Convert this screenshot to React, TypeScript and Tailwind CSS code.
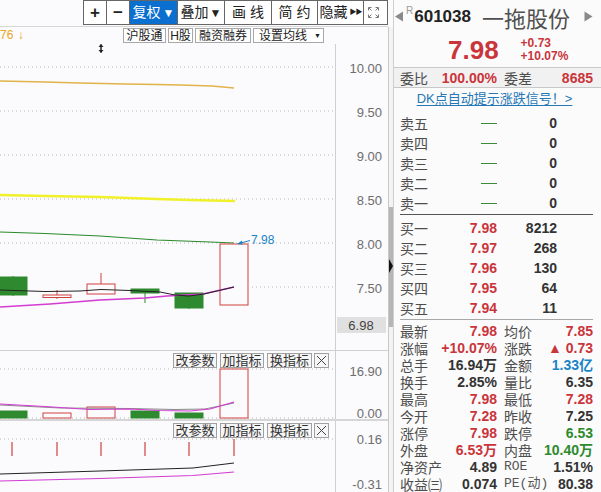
import React from "react";

const RED = "text-[#c9353b]";
const DARK = "text-[#333]";
const BLUE = "text-[#1a84c6]";
const GREEN = "text-[#2e8a2e]";

const sells = ["卖五", "卖四", "卖三", "卖二", "卖一"];
const buys = [
  ["买一", "7.98", "8212"],
  ["买二", "7.97", "268"],
  ["买三", "7.96", "130"],
  ["买四", "7.95", "64"],
  ["买五", "7.94", "11"],
];

const stats: [string, string, string, string, string, string][] = [
  ["最新", "7.98", RED, "均价", "7.85", RED],
  ["涨幅", "+10.07%", RED, "涨跌", "▲ 0.73", RED],
  ["总手", "16.94万", DARK, "金额", "1.33亿", BLUE],
  ["换手", "2.85%", DARK, "量比", "6.35", DARK],
  ["最高", "7.98", RED, "最低", "7.28", RED],
  ["今开", "7.28", RED, "昨收", "7.25", DARK],
  ["涨停", "7.98", RED, "跌停", "6.53", GREEN],
  ["外盘", "6.53万", RED, "内盘", "10.40万", GREEN],
  ["净资产", "4.89", DARK, "ROE", "1.51%", DARK],
  ["收益㈢", "0.074", DARK, "PE(动)", "80.38", DARK],
];

const candles = [
  { cx: 13, top: 277, bot: 295, wt: 276, wb: 296, up: false },
  { cx: 57, top: 295, bot: 297.5, wt: 290, wb: 299, up: true },
  { cx: 101, top: 284, bot: 294, wt: 273, wb: 294, up: true },
  { cx: 145, top: 289, bot: 293, wt: 289, wb: 303, up: false },
  { cx: 189, top: 293, bot: 308, wt: 293, wb: 309, up: false },
  { cx: 234, top: 244, bot: 305, wt: 244, wb: 305, up: true },
];

const vols = [
  { cx: 13, top: 411, up: false },
  { cx: 57, top: 413, up: true },
  { cx: 101, top: 407, up: true },
  { cx: 145, top: 411, up: false },
  { cx: 189, top: 413, up: false },
  { cx: 234, top: 369, up: true },
];

const CR = "#d0403f";
const CG = "#2f8a2f";

function Dotted({ y, x1 = 0, x2 = 335 }: { y: number; x1?: number; x2?: number }) {
  return <line x1={x1} x2={x2} y1={y} y2={y} stroke="#b8b8b8" strokeDasharray="1 3" />;
}

function AxisLabel({ y, v }: { y: number; v: string }) {
  return (
    <text x={382} y={y + 4.5} textAnchor="end" fontSize={13} fill="#6e6e6e" fontFamily="Liberation Sans">
      {v}
    </text>
  );
}

function PanelButtons() {
  const b = "h-[15px] border border-[#a0a0a0] bg-[#f6f6f6] text-[13px] leading-[13px] text-[#333] flex items-center justify-center whitespace-nowrap";
  return (
    <div className="absolute left-[173px] top-[2px] flex">
      <div className={`${b} w-[44px]`}>改参数</div>
      <div className={`${b} w-[44px] ml-[3px]`}>加指标</div>
      <div className={`${b} w-[45px] ml-[3px]`}>换指标</div>
      <div className={`${b} w-[15px] ml-[2px]`}>
        <svg width="11" height="11" viewBox="0 0 11 11">
          <path d="M1 1L10 10M10 1L1 10" stroke="#444" strokeWidth="1" />
        </svg>
      </div>
    </div>
  );
}

function Toolbar() {
  const c = "h-full flex items-center justify-center border-l border-[#666] text-[14px] text-[#222] whitespace-nowrap";
  return (
    <div className="h-[27px] border-b border-[#d6d6d6]">
      <div className="ml-[83px] flex h-[25px] border border-[#666] bg-white">
        <div className="w-[22px] h-full flex items-center justify-center text-[17px] font-bold text-[#222]">+</div>
        <div className={`${c} w-[23px] text-[17px] font-bold`}>−</div>
        <div className={`${c} w-[48px] bg-[#0b6fcf] text-white`}>
          复权<span className="text-[12px] ml-[2px]">▼</span>
        </div>
        <div className={`${c} w-[47px]`}>
          叠加<span className="text-[12px] ml-[1px]">▼</span>
        </div>
        <div className={`${c} w-[47px] tracking-[4px] pl-[4px]`}>画线</div>
        <div className={`${c} w-[46px] tracking-[4px] pl-[4px]`}>简约</div>
        <div className={`${c} w-[46px]`}>
          隐藏<span className="text-[7px] ml-[2px] tracking-[-1px]">▶▶</span>
        </div>
        <div className={`${c} w-[19px]`}>
          <svg width="11" height="11" viewBox="0 0 11 11" fill="none" stroke="#777">
            <path d="M0.5 3.5V0.5H3.5M7.5 0.5H10.5V3.5M10.5 7.5V10.5H7.5M3.5 10.5H0.5V7.5" />
            <path d="M1 1L3.5 3.5M10 1L7.5 3.5M10 10L7.5 7.5M1 10L3.5 7.5" />
          </svg>
        </div>
      </div>
    </div>
  );
}

function Row2() {
  const b = "h-[15px] border border-[#a8a8a8] bg-white text-[12px] leading-[12px] text-[#222] flex items-center justify-center whitespace-nowrap";
  return (
    <div className="h-[17px] flex items-start pt-[1px]">
      <div className="w-[123px] text-[12px] leading-[14px] text-[#eba51c] whitespace-nowrap">
        76 <span className="ml-[1px]">↓</span>
      </div>
      <div className={`${b} w-[43px]`}>沪股通</div>
      <div className={`${b} w-[25px] ml-[2px]`}>H股</div>
      <div className={`${b} w-[56px] ml-[2px]`}>融资融券</div>
      <div className={`${b} w-[71px] ml-[2px] justify-start pl-[5px]`}>
        设置均线<span className="ml-[7px] text-[7px]">▼</span>
      </div>
    </div>
  );
}

function MainChart() {
  return (
    <div className="flex h-[306px]">
      <svg width="335" height="306" viewBox="0 44 335 306">
        {[67, 111, 155, 199, 243].map((y) => (
          <Dotted key={y} y={y} />
        ))}
        <Dotted y={287} x1={252} />
        <path d="M101 44.5V52.5" stroke="#222" strokeWidth="1.5" />
        <path d="M98.5 47L101 44L103.5 47ZM98.5 50L101 53L103.5 50Z" fill="#222" />
        <polyline points="0,81 45,82 80,83 125,84 157,84.5 180,85 212,86 234,88" fill="none" stroke="#e1b44a" strokeWidth="1.3" />
        <polyline points="0,195 45,196 100,197 157,199 190,200 235,201" fill="none" stroke="#f1f12a" strokeWidth="2.5" />
        <polyline points="0,232 45,233.5 100,236 157,240 210,242 234,243" fill="none" stroke="#2b8a2b" strokeWidth="1.2" />
        {candles.map((k) => (
          <g key={k.cx}>
            <line x1={k.cx} x2={k.cx} y1={k.wt} y2={k.wb} stroke={k.up ? CR : CG} />
            <rect
              x={k.cx - 14}
              y={k.top}
              width={28}
              height={k.bot - k.top}
              fill={k.up ? "#fbfafc" : "#2f8a2f"}
              stroke={k.up ? CR : CG}
            />
          </g>
        ))}
        <polyline points="0,307 50,304 100,300 145,298 167,296 203,294 234,287" fill="none" stroke="#d23cd2" strokeWidth="1.3" />
        <polyline points="0,290 45,291.5 80,291 101,289.5 130,290.5 160,292 175,295 189,296 204,294 234,287" fill="none" stroke="#222" strokeWidth="1" />
        <line x1={250} y1={240.5} x2={239} y2={243.5} stroke="#1a84c6" />
        <path d="M237 244L242 240.5L242.5 244.5Z" fill="#1a84c6" />
        <text x={251} y={244} fontSize={12} fill="#1a84c6" fontFamily="Liberation Sans">
          7.98
        </text>
      </svg>
      <div className="w-[53px] border-l border-[#cfcfcf]">
        <svg width="52" height="306" viewBox="336 44 52 306">
          {[
            [68, "10.00"],
            [112, "9.50"],
            [156, "9.00"],
            [200, "8.50"],
            [244, "8.00"],
            [288, "7.50"],
          ].map(([y, v]) => (
            <AxisLabel key={v as string} y={y as number} v={v as string} />
          ))}
          <rect x={337} y={317} width={49} height={16} fill="#e0e0e0" />
          <text x={361} y={330} textAnchor="middle" fontSize={13} fill="#444" fontFamily="Liberation Sans">
            6.98
          </text>
        </svg>
      </div>
    </div>
  );
}

function VolumeChart() {
  return (
    <div className="relative flex h-[69px] border-t border-[#d0d0d0]">
      <svg width="335" height="68" viewBox="0 351 335 68">
        <Dotted y={369} />
        <Dotted y={418} />
        {vols.map((v) => (
          <rect
            key={v.cx}
            x={v.cx - 14}
            y={v.top}
            width={28}
            height={418 - v.top}
            fill={v.up ? "#fbfafc" : "#2f8a2f"}
            stroke={v.up ? CR : CG}
          />
        ))}
        <polyline points="0,405 60,408 130,408.5 175,409.5 205,409 234,403" fill="none" stroke="#8a8a8a" strokeWidth="1" />
        <polyline points="0,404 45,406.5 90,409.5 130,409 160,410.5 190,411 210,409 234,402" fill="none" stroke="#d23cd2" strokeWidth="1.2" />
      </svg>
      <div className="w-[53px] border-l border-[#cfcfcf]">
        <svg width="52" height="68" viewBox="336 351 52 68">
          <AxisLabel y={371} v="16.90" />
          <AxisLabel y={413} v="0.00" />
        </svg>
      </div>
      <PanelButtons />
    </div>
  );
}

function MacdChart() {
  return (
    <div className="relative flex flex-1 border-t-2 border-[#d6d6d6]">
      <svg width="335" height="71" viewBox="0 421 335 71">
        <Dotted y={439} />
        {[12, 57, 101, 145, 189].map((x) => (
          <line key={x} x1={x} x2={x} y1={442} y2={456} stroke={CR} strokeWidth="1.2" />
        ))}
        <line x1={234} x2={234} y1={439} y2={456} stroke={CR} strokeWidth="1.2" />
        <polyline points="0,474 100,471 193,468 234,463" fill="none" stroke="#222" strokeWidth="1" />
        <polyline points="0,481 100,478.5 193,475.5 234,472" fill="none" stroke="#d23cd2" strokeWidth="1.2" />
      </svg>
      <div className="w-[53px] border-l border-[#cfcfcf]">
        <svg width="52" height="71" viewBox="336 421 52 71">
          <AxisLabel y={439} v="0.16" />
          <AxisLabel y={484} v="-0.31" />
        </svg>
      </div>
      <PanelButtons />
    </div>
  );
}

function Quote() {
  const label = "text-[14px] leading-[16px] text-[#4d4d4d] whitespace-nowrap font-['Noto_Sans_CJK_SC',sans-serif]";
  const num = "text-[14px] leading-[16px] font-bold whitespace-nowrap font-['Liberation_Sans','Noto_Sans_CJK_SC',sans-serif]";
  const mono = "text-[13px] leading-[16px] text-[#555] whitespace-nowrap font-['Liberation_Mono','Noto_Sans_CJK_SC',monospace]";
  return (
    <div className="w-[208px] border-l border-[#cfcfcf] bg-[#fbfbfb] flex flex-col">
      <div className="h-[33px] flex items-center">
        <svg width="10" height="11" viewBox="0 0 10 11">
          <path d="M9 0.5L1 5.5L9 10.5Z" fill="#8a8a8a" />
        </svg>
        <span className="self-start mt-[3px] ml-[2px] text-[10px] text-[#9a9a9a]">R</span>
        <span className="ml-[1px] text-[17px] font-bold text-[#222]">601038</span>
        <span className="ml-[11px] text-[22px] leading-[26px] text-[#505050] font-['Noto_Sans_CJK_SC',sans-serif]">一拖股份</span>
        <svg width="9" height="11" viewBox="0 0 9 11" className="ml-auto mr-[8px]">
          <path d="M0.5 0.5L8.5 5.5L0.5 10.5Z" fill="#8a8a8a" />
        </svg>
      </div>
      <div className="h-[34px] flex items-center">
        <span className={`ml-[54px] text-[26px] font-bold leading-[28px] ${RED}`}>7.98</span>
        <div className={`ml-[22px] flex flex-col text-[12px] font-bold leading-[13px] ${RED}`}>
          <span>+0.73</span>
          <span>+10.07%</span>
        </div>
      </div>
      <div className="h-[21px] border-y border-[#c8c8c8] bg-[#f1f1f1] flex items-center pl-[6px] pr-[8px]">
        <div className="w-[97px] flex justify-between items-center">
          <span className={label}>委比</span>
          <span className={`${num} ${RED}`}>100.00%</span>
        </div>
        <div className="ml-[7px] flex-1 flex justify-between items-center">
          <span className={label}>委差</span>
          <span className={`${num} ${RED}`}>8685</span>
        </div>
      </div>
      <div className="h-[22px] flex items-center justify-center">
        <span className="ml-[-6px] text-[13px] text-[#2577b5] underline underline-offset-2 whitespace-nowrap">DK点自动提示涨跌信号！&gt;</span>
      </div>
      <div className="mt-[3px] pl-[6px] pr-[8px]">
        {sells.map((s) => (
          <div key={s} className="h-[20px] flex items-center">
            <div className="w-[97px] flex justify-between items-center">
              <span className={label}>{s}</span>
              <span className="w-[16px] h-px bg-[#3a8a3a]" />
            </div>
            <span className={`w-[60px] text-right ${num} ${DARK}`}>0</span>
          </div>
        ))}
        <div className="mt-[1px] border-t border-[#555]" />
        <div className="mt-[3px]">
          {buys.map(([s, p, q]) => (
            <div key={s} className="h-[20px] flex items-center">
              <div className="w-[97px] flex justify-between items-center">
                <span className={label}>{s}</span>
                <span className={`${num} ${RED}`}>{p}</span>
              </div>
              <span className={`w-[60px] text-right ${num} ${DARK}`}>{q}</span>
            </div>
          ))}
        </div>
        <div className="mt-[1px] border-t border-[#a8a8a8]" />
        <div className="mt-[2px]">
          {stats.map(([l1, v1, c1, l2, v2, c2]) => (
            <div key={l1} className="h-[17px] flex items-center">
              <div className="w-[97px] flex justify-between items-center">
                <span className={label}>{l1}</span>
                <span className={`${num} ${c1}`}>{v1}</span>
              </div>
              <div className="ml-[7px] flex-1 flex justify-between items-center">
                <span className={l2 === "ROE" || l2 === "PE(动)" ? mono : label}>{l2}</span>
                <span className={`${num} ${c2}`}>{v2}</span>
              </div>
            </div>
          ))}
        </div>
      </div>
    </div>
  );
}

export default function App() {
  return (
    <div className="w-[601px] h-[492px] overflow-hidden flex bg-[#fbfafc] font-['Liberation_Sans','Noto_Sans_CJK_SC',sans-serif]">
      <div className="w-[388px] flex flex-col">
        <Toolbar />
        <Row2 />
        <MainChart />
        <VolumeChart />
        <MacdChart />
      </div>
      <div className="w-[5px] flex flex-col">
        <div className="h-[27px]" />
        <div className="relative flex-1 border-l border-[#c8c8c8] bg-[#f3f3f3]">
          <div className="mt-[180px] h-[120px] bg-[#b6b6b6]" />
          <svg width="5" height="14" viewBox="0 0 5 14" className="absolute left-0 top-[232px]">
            <path d="M0 0L4 7L0 14Z" fill="#111" />
          </svg>
        </div>
      </div>
      <Quote />
    </div>
  );
}
